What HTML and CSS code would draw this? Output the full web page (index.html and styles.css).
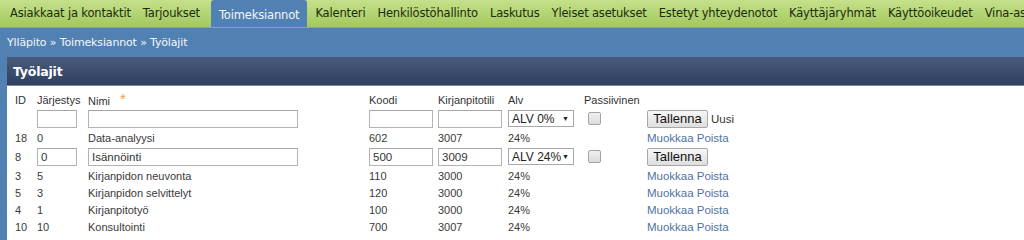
FILE: index.html
```html
<!DOCTYPE html>
<html lang="fi">
<head>
<meta charset="utf-8">
<title>Työlajit</title>
<link rel="stylesheet" href="styles.css">
</head>
<body>
<nav class="topnav">
  <a class="navitem">Asiakkaat ja kontaktit</a>
  <a class="navitem">Tarjoukset</a>
  <a class="navitem active">Toimeksiannot</a>
  <a class="navitem">Kalenteri</a>
  <a class="navitem">Henkilöstöhallinto</a>
  <a class="navitem">Laskutus</a>
  <a class="navitem">Yleiset asetukset</a>
  <a class="navitem">Estetyt yhteydenotot</a>
  <a class="navitem">Käyttäjäryhmät</a>
  <a class="navitem">Käyttöoikeudet</a>
  <a class="navitem">Vina-asetukset</a>
</nav>
<div class="main">
  <div class="crumbs">Ylläpito » Toimeksiannot » Työlajit</div>
  <div class="panel">
    <div class="panel-head">Työlajit</div>
    <div class="panel-body">
      <table class="grid">
        <colgroup>
          <col class="c-id"><col class="c-ord"><col class="c-name"><col class="c-code"><col class="c-acc"><col class="c-vat"><col class="c-pass"><col class="c-act">
        </colgroup>
        <tr class="head">
          <td>ID</td><td>Järjestys</td><td>Nimi <span class="req">*</span></td><td>Koodi</td><td>Kirjanpitotili</td><td>Alv</td><td>Passiivinen</td><td></td>
        </tr>
        <tr class="editrow">
          <td></td>
          <td><input class="in in-ord" type="text"></td>
          <td><input class="in in-name" type="text"></td>
          <td><input class="in in-code" type="text"></td>
          <td><input class="in in-acc" type="text"></td>
          <td><span class="sel">ALV 0%<span class="arrow">▼</span></span></td>
          <td><span class="chk"></span></td>
          <td><button class="btn">Tallenna</button> <span class="new">Uusi</span></td>
        </tr>
        <tr><td>18</td><td>0</td><td>Data-analyysi</td><td>602</td><td>3007</td><td>24%</td><td></td><td><a class="lnk">Muokkaa</a> <a class="lnk">Poista</a></td></tr>
        <tr class="editrow">
          <td>8</td>
          <td><input class="in in-ord" type="text" value="0"></td>
          <td><input class="in in-name" type="text" value="Isännöinti"></td>
          <td><input class="in in-code" type="text" value="500"></td>
          <td><input class="in in-acc" type="text" value="3009"></td>
          <td><span class="sel">ALV 24%<span class="arrow">▼</span></span></td>
          <td><span class="chk"></span></td>
          <td><button class="btn">Tallenna</button></td>
        </tr>
        <tr><td>3</td><td>5</td><td>Kirjanpidon neuvonta</td><td>110</td><td>3000</td><td>24%</td><td></td><td><a class="lnk">Muokkaa</a> <a class="lnk">Poista</a></td></tr>
        <tr><td>5</td><td>3</td><td>Kirjanpidon selvittelyt</td><td>120</td><td>3000</td><td>24%</td><td></td><td><a class="lnk">Muokkaa</a> <a class="lnk">Poista</a></td></tr>
        <tr><td>4</td><td>1</td><td>Kirjanpitotyö</td><td>100</td><td>3000</td><td>24%</td><td></td><td><a class="lnk">Muokkaa</a> <a class="lnk">Poista</a></td></tr>
        <tr><td>10</td><td>10</td><td>Konsultointi</td><td>700</td><td>3007</td><td>24%</td><td></td><td><a class="lnk">Muokkaa</a> <a class="lnk">Poista</a></td></tr>
      </table>
    </div>
  </div>
</div>
</body>
</html>
```

FILE: styles.css
```css
html, body {
  margin: 0;
  padding: 0;
  background: #5181b2;
  overflow: hidden;
}
html {
  height: 100%;
}
body {
  width: 100%;
  height: 100%;
  min-height: 238px;
  display: flex;
  flex-direction: column;
}
.topnav {
  display: flex;
  flex: none;
  flex-wrap: nowrap;
  height: 28px;
  padding-left: 4px;
  background: linear-gradient(#c6e08c, #b3d573 50%, #a2c75e);
  border-bottom: 1px solid #8fb253;
  box-sizing: border-box;
  white-space: nowrap;
  overflow: hidden;
}
.navitem {
  display: flex;
  align-items: center;
  padding: 0 6px 2px;
  font-family: "DejaVu Sans", Verdana, sans-serif;
  font-size: 11.5px;
  letter-spacing: -0.16px;
  color: #1c2a10;
  flex: none;
}
.navitem.active {
  background: #5181b2;
  color: #f4f7fb;
  padding: 0 8px 2px 8px;
  margin: 0 2px 0 5px;
  border-radius: 3px 3px 0 0;
  height: 29px;
}
.main {
  flex: 1;
  min-height: 0;
  display: flex;
  flex-direction: column;
}
.crumbs {
  flex: none;
  height: 29px;
  display: flex;
  align-items: center;
  padding-left: 7px;
  font-family: "DejaVu Sans", Verdana, sans-serif;
  font-size: 11px;
  letter-spacing: -0.15px;
  color: #f4f7fb;
}
.panel {
  flex: 1;
  min-height: 0;
  margin-left: 7px;
  background: #ffffff;
  display: flex;
  flex-direction: column;
}
.panel-head {
  flex: none;
  height: 28px;
  display: flex;
  align-items: center;
  padding-left: 6px;
  background: linear-gradient(#4b5b7c, #2f3f60);
  border-bottom: 1px solid #7d8aa3;
  font-family: "DejaVu Sans", Verdana, sans-serif;
  font-weight: bold;
  font-size: 12.5px;
  letter-spacing: -0.2px;
  color: #ffffff;
}
.panel-body {
  flex: 1;
  min-height: 0;
  overflow: hidden;
  padding: 5px 0 0 8px;
  background: #ffffff;
}
.grid {
  border-collapse: collapse;
  table-layout: fixed;
  width: 780px;
  font-family: "Liberation Sans", Arial, sans-serif;
  font-size: 11px;
  color: #3a3a3a;
}
.c-id { width: 22px; }
.c-ord { width: 51px; }
.c-name { width: 281px; }
.c-code { width: 69px; }
.c-acc { width: 70px; }
.c-vat { width: 76px; }
.c-pass { width: 63px; }
.c-act { width: 148px; }
.grid td {
  padding: 0;
  height: 17px;
  vertical-align: middle;
  white-space: nowrap;
}
.grid tr.head td {
  color: #333;
}
.grid tr.editrow td {
  height: 21px;
}
.req {
  color: #f0a23c;
  font-size: 15px;
  margin-left: 7px;
  position: relative;
  top: -1px;
}
.in {
  box-sizing: border-box;
  height: 18px;
  border: 1px solid #b3b3b3;
  border-top-color: #a6a6a6;
  padding: 0 3px;
  margin: 0;
  font-family: "Liberation Sans", Arial, sans-serif;
  font-size: 11.5px;
  color: #333;
  background: #fff;
  display: block;
}
.in-ord { width: 40px; }
.in-name { width: 210px; }
.in-code { width: 64px; }
.in-acc { width: 64px; }
.sel {
  box-sizing: border-box;
  display: flex;
  align-items: center;
  justify-content: space-between;
  width: 66px;
  height: 17px;
  border: 1px solid #a9a9a9;
  padding: 0 4px 0 3px;
  font-size: 12px;
  color: #222;
  background: #fff;
}
.arrow {
  font-size: 7px;
  color: #222;
}
.chk {
  display: block;
  box-sizing: border-box;
  width: 13px;
  height: 13px;
  margin-left: 4px;
  border: 1px solid #a4a4a4;
  border-radius: 2px;
  background: linear-gradient(#f0f0f0, #dcdcdc);
}
.btn {
  box-sizing: border-box;
  height: 18px;
  width: 61px;
  padding: 0;
  margin: 0;
  border: 1px solid #a7a7a7;
  border-radius: 2px;
  background: linear-gradient(#f7f7f7, #dedede);
  font-family: "Liberation Sans", Arial, sans-serif;
  font-size: 13px;
  color: #111;
  vertical-align: middle;
}
.new {
  font-size: 11.5px;
  color: #333;
  vertical-align: middle;
}
.lnk {
  color: #4f72a3;
  font-size: 11.5px;
}
```
